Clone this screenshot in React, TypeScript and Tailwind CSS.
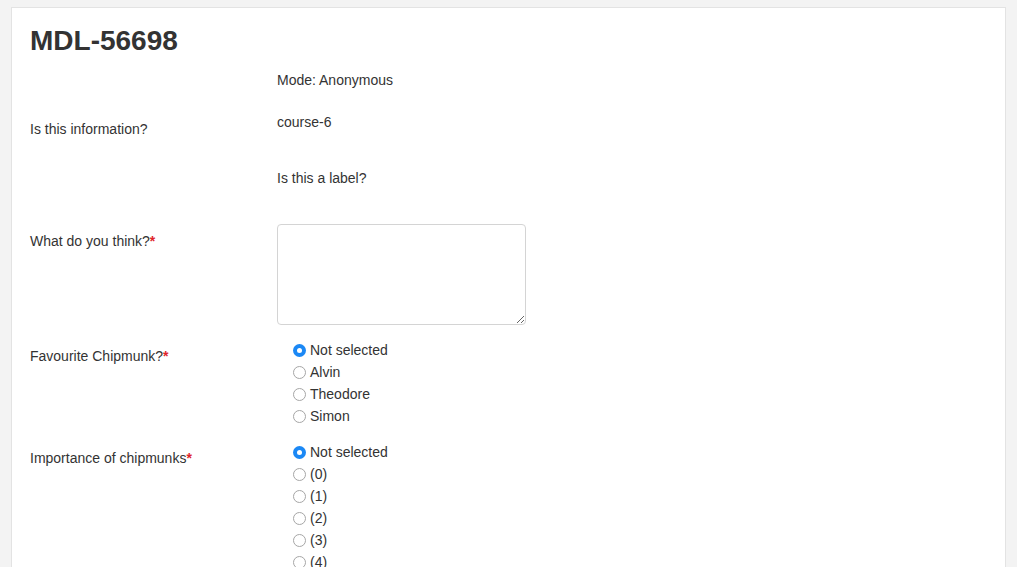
import React from "react";

const font = { fontFamily: '"Liberation Sans", Arial, sans-serif' };

function Radio({ label, checked }: { label: string; checked?: boolean }) {
  return (
    <div className="flex h-[22px] items-center pl-4">
      {checked ? (
        <span className="flex h-[13px] w-[13px] items-center justify-center rounded-full bg-[#1b88f5]">
          <span className="h-[5px] w-[5px] rounded-full bg-white" />
        </span>
      ) : (
        <span className="h-[13px] w-[13px] rounded-full border border-[#a6a6a6] bg-white" />
      )}
      <span className="ml-1">{label}</span>
    </div>
  );
}

function Req() {
  return <span className="font-bold text-[#e0242b]">*</span>;
}

function Row({ label, className, children }: { label?: React.ReactNode; className?: string; children: React.ReactNode }) {
  return (
    <div className={"flex " + (className ?? "")}>
      <div className="w-[247px] shrink-0 pt-[7px] leading-5">{label}</div>
      <div className="flex-1">{children}</div>
    </div>
  );
}

export default function App() {
  return (
    <div className="h-[567px] overflow-hidden bg-[#f3f3f3] pt-[7px]" style={font}>
      <div className="mx-[11px] h-[560px] border border-b-0 border-[#e3e3e3] bg-white px-[18px] pt-4 text-[14px] text-[#333]">
        <h1 className="h-[34px] text-[28px] font-bold leading-[34px] text-[#333]">MDL-56698</h1>

        <Row className="mt-[12px]">
          <div className="leading-5">Mode: Anonymous</div>
        </Row>

        <Row label="Is this information?" className="mt-[22px]">
          <div className="leading-5">course-6</div>
        </Row>

        <Row className="mt-[29px]">
          <div className="leading-5">Is this a label?</div>
        </Row>

        <Row label={<>What do you think?<Req /></>} className="mt-[36px]">
          <textarea className="block h-[101px] w-[249px] rounded-[4px] border border-[#d4d4d4] bg-white" />
        </Row>

        <Row label={<>Favourite Chipmunk?<Req /></>} className="mt-[14px]">
          <Radio label="Not selected" checked />
          <Radio label="Alvin" />
          <Radio label="Theodore" />
          <Radio label="Simon" />
        </Row>

        <Row label={<>Importance of chipmunks<Req /></>} className="mt-[14px]">
          <Radio label="Not selected" checked />
          <Radio label="(0)" />
          <Radio label="(1)" />
          <Radio label="(2)" />
          <Radio label="(3)" />
          <Radio label="(4)" />
        </Row>
      </div>
    </div>
  );
}
